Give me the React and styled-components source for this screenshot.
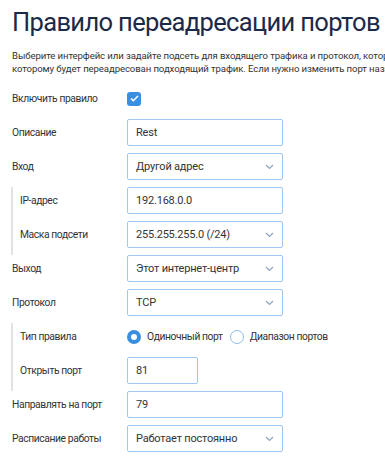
import React from 'react';
import styled, { createGlobalStyle } from 'styled-components';

const GlobalStyle = createGlobalStyle`
  body {
    margin: 0;
    background: #ffffff;
    font-family: Roboto, "Noto Sans", sans-serif;
    overflow: hidden;
  }
`;

const Page = styled.div`
  width: 700px;
  padding: 0 0 0 12px;
  color: #333333;
`;

const Title = styled.h1`
  margin: 0;
  padding-top: 6px;
  font-size: 25.5px;
  font-weight: 400;
  letter-spacing: -0.65px;
  line-height: 32px;
  color: #1b2a47;
  white-space: nowrap;
`;

const Intro = styled.p`
  margin: 11px 0 0;
  font-size: 9.6px;
  letter-spacing: -0.1px;
  line-height: 13px;
  color: #333333;
  white-space: nowrap;
`;

const Form = styled.div`
  margin-top: 10px;
  display: flex;
  flex-direction: column;
`;

const Group = styled.div`
  border-left: 2px solid #e2e2e2;
  margin-left: -1px;
  padding-left: 7px;
`;

const Row = styled.div`
  display: grid;
  grid-template-columns: ${(p) => (p.$nested ? '107px' : '115px')} auto;
  align-items: center;
  height: 27px;
  padding-bottom: 7px;
`;

const Label = styled.span`
  font-size: 10.3px;
  letter-spacing: -0.4px;
  color: #333333;
  white-space: nowrap;
`;

const Box = styled.div`
  box-sizing: border-box;
  width: ${(p) => p.$width || 156}px;
  height: 27px;
  border: 1px solid #9fc7ef;
  border-radius: 2px;
  padding: 0 8px;
  display: flex;
  align-items: center;
  justify-content: space-between;
  font-size: 11px;
  letter-spacing: -0.2px;
  color: #333333;
`;

const Check = styled.div`
  width: 14px;
  height: 14px;
  border-radius: 3px;
  background: #3b8fe1;
  display: flex;
  align-items: center;
  justify-content: center;
`;

const Radios = styled.div`
  display: flex;
  align-items: center;
  gap: 7px;
`;

const RadioItem = styled.label`
  display: flex;
  align-items: center;
  gap: 6px;
  font-size: 10.3px;
  letter-spacing: -0.4px;
  color: #333333;
  white-space: nowrap;
`;

const RadioDot = styled.span`
  box-sizing: border-box;
  width: 14px;
  height: 14px;
  border-radius: 50%;
  border: ${(p) => (p.$on ? '4px solid #3b8fe1' : '1px solid #8dbbea')};
  background: #ffffff;
`;

const Chevron = () => (
  <svg width="9" height="6" viewBox="0 0 9 6">
    <path d="M1 1l3.5 3.5L8 1" fill="none" stroke="#8aa6c4" strokeWidth="1.2" />
  </svg>
);

const Field = ({ value, select, width }) => (
  <Box $width={width}>
    <span>{value}</span>
    {select && <Chevron />}
  </Box>
);

export default function App() {
  return (
    <Page>
      <GlobalStyle />
      <Title>Правило переадресации портов</Title>
      <Intro>
        Выберите интерфейс или задайте подсеть для входящего трафика и протокол, который нужно перенаправить, а также устройство,
        <br />
        которому будет переадресован подходящий трафик. Если нужно изменить порт назначения, укажите его.
      </Intro>
      <Form>
        <Row>
          <Label>Включить правило</Label>
          <Check>
            <svg width="9" height="7" viewBox="0 0 9 7">
              <path d="M1 3.5l2.3 2.2L8 1" fill="none" stroke="#fff" strokeWidth="1.6" />
            </svg>
          </Check>
        </Row>
        <Row>
          <Label>Описание</Label>
          <Field value="Rest" />
        </Row>
        <Row>
          <Label>Вход</Label>
          <Field value="Другой адрес" select />
        </Row>
        <Group>
          <Row $nested>
            <Label>IP-адрес</Label>
            <Field value="192.168.0.0" />
          </Row>
          <Row $nested>
            <Label>Маска подсети</Label>
            <Field value="255.255.255.0 (/24)" select />
          </Row>
        </Group>
        <Row>
          <Label>Выход</Label>
          <Field value="Этот интернет-центр" select />
        </Row>
        <Row>
          <Label>Протокол</Label>
          <Field value="TCP" select />
        </Row>
        <Group>
          <Row $nested>
            <Label>Тип правила</Label>
            <Radios>
              <RadioItem>
                <RadioDot $on />
                Одиночный порт
              </RadioItem>
              <RadioItem>
                <RadioDot />
                Диапазон портов
              </RadioItem>
            </Radios>
          </Row>
          <Row $nested>
            <Label>Открыть порт</Label>
            <Field value="81" width={71} />
          </Row>
        </Group>
        <Row>
          <Label>Направлять на порт</Label>
          <Field value="79" />
        </Row>
        <Row>
          <Label>Расписание работы</Label>
          <Field value="Работает постоянно" select />
        </Row>
      </Form>
    </Page>
  );
}
